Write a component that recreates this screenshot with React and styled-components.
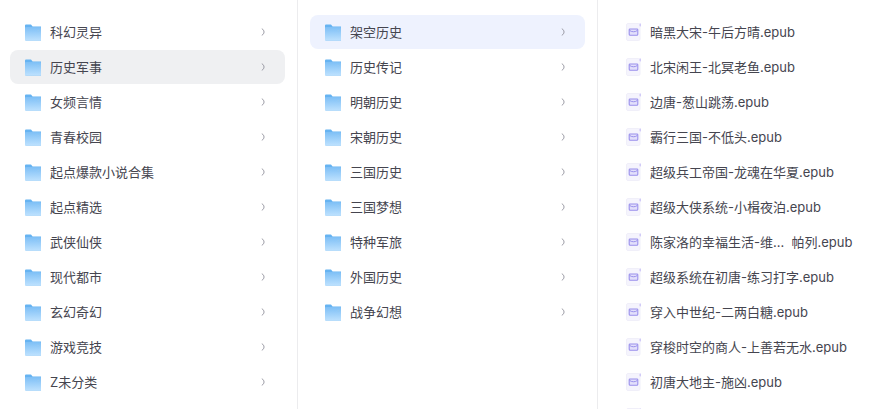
import React from 'react';
import styled, { createGlobalStyle } from 'styled-components';

const GlobalStyle = createGlobalStyle`
  html, body {
    margin: 0;
    padding: 0;
    background: #fff;
    overflow: hidden;
  }
`;

const Columns = styled.div`
  display: flex;
  width: 891px;
  height: 409px;
  overflow: hidden;
  font-family: Inter, "Noto Sans CJK SC", sans-serif;
  font-size: 13px;
  color: #45454f;
`;

const Column = styled.div`
  box-sizing: border-box;
  flex: ${(p) => (p.$last ? '1' : `0 0 ${p.$first ? 298 : 300}px`)};
  height: 409px;
  padding: 15px 12px 0 ${(p) => (p.$first ? 10 : 12)}px;
  border-right: ${(p) => (p.$last ? 'none' : '1px solid #ececee')};
  display: flex;
  flex-direction: column;
  gap: 1px;
  overflow: hidden;
`;

const Row = styled.div`
  flex: none;
  display: flex;
  align-items: center;
  height: 34px;
  padding: 0 20px 0 ${(p) => (p.$file ? 16 : 15)}px;
  border-radius: 8px;
  background: ${(p) => (p.$active === 'grey' ? '#eff0f2' : p.$active === 'blue' ? '#eef2fe' : 'transparent')};
`;

const Name = styled.span`
  flex: 1;
  margin-left: ${(p) => (p.$file ? '9px' : '8px')};
  white-space: pre;
  line-height: 34px;
`;

const Chevron = styled.svg`
  flex: none;
  width: 4px;
  height: 8px;
`;

const Folder = () => (
  <svg width="17" height="17" viewBox="0 0 17 17" style={{ flex: 'none' }}>
    <defs>
      <linearGradient id="folderBody" x1="0" y1="0" x2="0" y2="1">
        <stop offset="0" stopColor="#7dbff6" />
        <stop offset="1" stopColor="#bde1fe" />
      </linearGradient>
    </defs>
    <path d="M1 0.5h5l1.6 2h8.4v14H1a1 1 0 0 1-1-1V1.5a1 1 0 0 1 1-1z" fill="#66b3f1" />
    <rect x="0" y="3" width="16" height="13.5" rx="0.8" fill="url(#folderBody)" />
    <rect x="12.5" y="6" width="1.6" height="1.6" fill="#95c9f2" />
  </svg>
);

const Epub = () => (
  <svg width="15" height="18" viewBox="0 0 15 18" style={{ flex: 'none' }}>
    <rect x="0.5" y="0.5" width="13.5" height="17" rx="1.5" fill="#f5f4fd" stroke="#f0eff9" />
    <rect x="13" y="0" width="2" height="4" fill="#fff" />
    <rect x="13.6" y="0.5" width="1" height="3" fill="#b3a9f2" />
    <path
      d="M4 6h7a.8.8 0 0 1 .8.8v4.4a1 1 0 0 1-1 1H4.2a1 1 0 0 1-1-1V6.8A.8.8 0 0 1 4 6z"
      fill="#e2dffb"
      stroke="#9a90ec"
      strokeWidth="1.1"
    />
    <path d="M3.6 7.4c1.8 1.8 6 1.8 7.8 0" fill="none" stroke="#9a90ec" strokeWidth="1" />
  </svg>
);

const categories = ['科幻灵异', '历史军事', '女频言情', '青春校园', '起点爆款小说合集', '起点精选', '武侠仙侠', '现代都市', '玄幻奇幻', '游戏竞技', 'Z未分类'];
const history = ['架空历史', '历史传记', '明朝历史', '宋朝历史', '三国历史', '三国梦想', '特种军旅', '外国历史', '战争幻想'];
const books = [
  '暗黑大宋-午后方晴.epub',
  '北宋闲王-北冥老鱼.epub',
  '边唐-葱山跳荡.epub',
  '霸行三国-不低头.epub',
  '超级兵工帝国-龙魂在华夏.epub',
  '超级大侠系统-小楫夜泊.epub',
  '陈家洛的幸福生活-维...  帕列.epub',
  '超级系统在初唐-练习打字.epub',
  '穿入中世纪-二两白糖.epub',
  '穿梭时空的商人-上善若无水.epub',
  '初唐大地主-施凶.epub',
  '',
];

const FolderRow = ({ name, active }) => (
  <Row $active={active}>
    <Folder />
    <Name>{name}</Name>
    <Chevron viewBox="0 0 4 8">
      <path d="M0.8 0.6c1.5 1 2.2 2.1 2.2 3.4s-.7 2.4-2.2 3.4" fill="none" stroke="#8d8d98" strokeWidth="0.9" />
    </Chevron>
  </Row>
);

export default function App() {
  return (
    <>
      <GlobalStyle />
      <Columns>
        <Column $first>
          {categories.map((name) => (
            <FolderRow key={name} name={name} active={name === '历史军事' ? 'grey' : undefined} />
          ))}
        </Column>
        <Column>
          {history.map((name) => (
            <FolderRow key={name} name={name} active={name === '架空历史' ? 'blue' : undefined} />
          ))}
        </Column>
        <Column $last>
          {books.map((name) => (
            <Row key={name} $file>
              <Epub />
              <Name $file>{name}</Name>
            </Row>
          ))}
        </Column>
      </Columns>
    </>
  );
}
